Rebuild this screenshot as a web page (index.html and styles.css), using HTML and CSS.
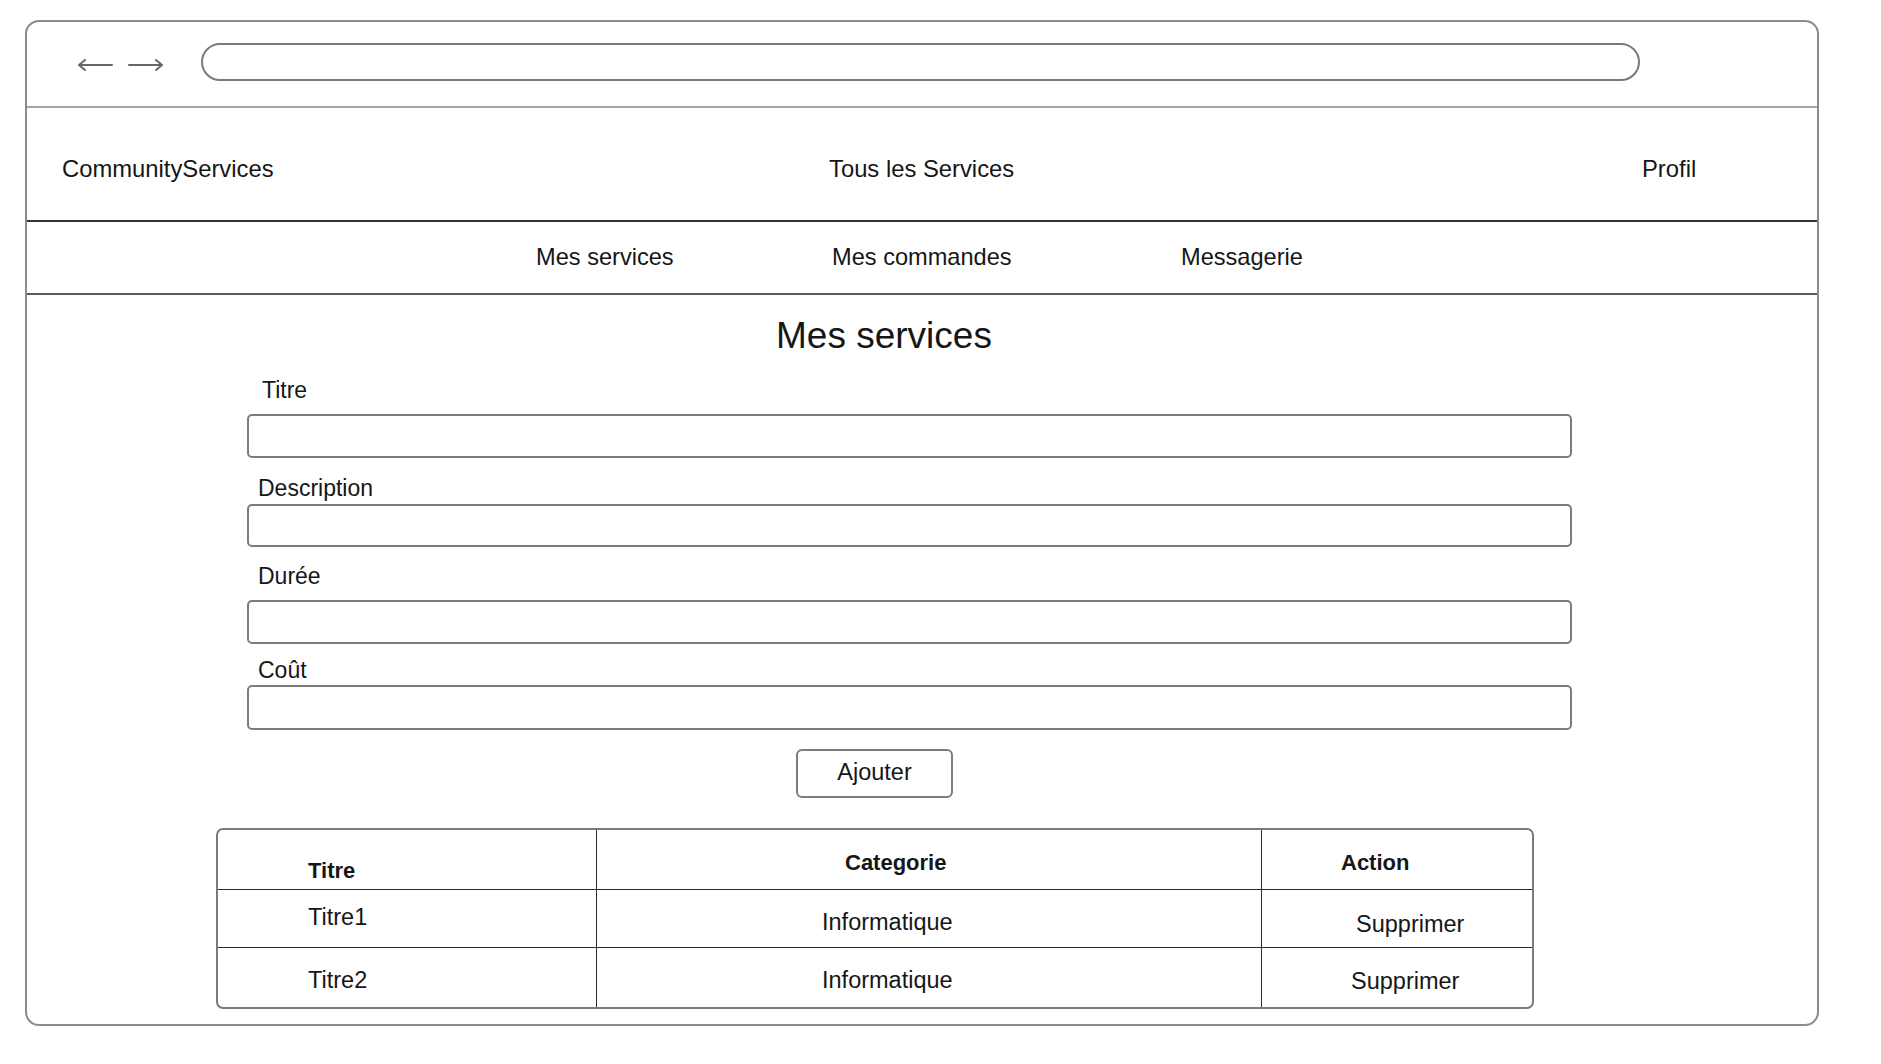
FILE: index.html
```html
<!DOCTYPE html>
<html lang="fr">
<head>
<meta charset="utf-8">
<title>CommunityServices - Mes services</title>
<link rel="stylesheet" href="styles.css">
</head>
<body>
<div class="frame">
  <div class="browserbar">
    <div class="arrows">
      <svg class="arrow" width="36" height="14" viewBox="0 0 36 14"><path d="M35 7H2M8 2L2 7L8 12" fill="none" stroke="#666" stroke-width="2" stroke-linecap="round" stroke-linejoin="round"/></svg>
      <svg class="arrow" width="36" height="14" viewBox="0 0 36 14"><path d="M1 7H34M28 2L34 7L28 12" fill="none" stroke="#666" stroke-width="2" stroke-linecap="round" stroke-linejoin="round"/></svg>
    </div>
    <div class="urlbar"></div>
  </div>
  <div class="nav">
    <span class="nav-item">CommunityServices</span>
    <span class="nav-item">Tous les Services</span>
    <span class="nav-item">Profil</span>
  </div>
  <div class="subnav">
    <span class="sub-item">Mes services</span>
    <span class="sub-item">Mes commandes</span>
    <span class="sub-item">Messagerie</span>
  </div>
  <div class="main">
    <h1 class="title">Mes services</h1>
    <form class="form">
      <label class="label l-titre">Titre</label>
      <div class="input i-titre"></div>
      <label class="label l-desc">Description</label>
      <div class="input i-desc"></div>
      <label class="label l-duree">Durée</label>
      <div class="input i-duree"></div>
      <label class="label l-cout">Coût</label>
      <div class="input i-cout"></div>
      <div class="btn-row"><button type="button" class="btn">Ajouter</button></div>
    </form>
    <table class="table">
      <thead>
        <tr class="row-head">
          <th class="c1 h-titre">Titre</th>
          <th class="c2 h-cat">Categorie</th>
          <th class="c3 h-action">Action</th>
        </tr>
      </thead>
      <tbody>
        <tr class="row1">
          <td class="c1 r1-titre">Titre1</td>
          <td class="c2 r-cat r1-cat">Informatique</td>
          <td class="c3 r1-act">Supprimer</td>
        </tr>
        <tr class="row2">
          <td class="c1 r2-titre">Titre2</td>
          <td class="c2 r-cat">Informatique</td>
          <td class="c3 r2-act">Supprimer</td>
        </tr>
      </tbody>
    </table>
  </div>
</div>
</body>
</html>
```
FILE: styles.css
```css
* { box-sizing: border-box; }
html, body { margin: 0; padding: 0; background: #fff; }
body {
  font-family: "Liberation Sans", Arial, sans-serif;
  color: #161616;
  font-size: 23px;
}
.frame {
  margin: 20px 0 0 25px;
  width: 1794px;
  height: 1006px;
  border: 2px solid #8c8c8c;
  border-radius: 14px;
  overflow: hidden;
}
.browserbar {
  height: 86px;
  border-bottom: 2px solid #a3a3a3;
  display: flex;
  align-items: flex-start;
  padding-left: 50px;
}
.arrows {
  display: flex;
  gap: 15px;
  margin-top: 36px;
}
.arrow { display: block; }
.urlbar {
  margin-left: 37px;
  margin-top: 21px;
  width: 1439px;
  height: 38px;
  border: 2px solid #7a7a7a;
  border-radius: 19px;
}
.nav {
  height: 114px;
  border-bottom: 2px solid #333;
  display: grid;
  grid-template-columns: 767px 813px auto;
  align-items: center;
  padding-left: 35px;
  padding-top: 9px;
  font-size: 23.8px;
}
.nav-item { line-height: 28px; }
.subnav {
  height: 73px;
  border-bottom: 2px solid #5a5a5a;
  display: grid;
  grid-template-columns: 296px 349px auto;
  align-items: center;
  padding-left: 509px;
  padding-bottom: 1px;
  font-size: 23.6px;
}
.sub-item { line-height: 28px; }
.main { position: relative; }
.title {
  margin: 19px 0 0 749px;
  font-size: 37px;
  font-weight: normal;
  line-height: 44px;
}
.form {
  margin: 0 0 0 220px;
  width: 1325px;
  display: flex;
  flex-direction: column;
}
.label { display: block; line-height: 28px; }
.l-titre { margin: 18px 0 0 15px; }
.l-desc { margin: 16px 0 0 11px; }
.l-duree { margin: 15px 0 0 11px; }
.l-cout { margin: 12px 0 0 11px; }
.input {
  border: 2px solid #7d7d7d;
  border-radius: 5px;
  height: 44px;
}
.i-titre { margin-top: 10px; }
.i-desc { margin-top: 2px; height: 43px; }
.i-duree { margin-top: 10px; }
.i-cout { margin-top: 1px; height: 45px; }
.btn-row { margin-top: 19px; padding-left: 549px; }
.btn {
  width: 157px;
  height: 49px;
  border: 2px solid #7d7d7d;
  border-radius: 6px;
  background: #fff;
  font-family: "Liberation Sans", Arial, sans-serif;
  font-size: 23.5px;
  color: #161616;
  padding: 0;
  line-height: 28px;
  padding-bottom: 4px;
}
.table {
  margin: 30px 0 0 189px;
  width: 1318px;
  border-collapse: separate;
  border-spacing: 0;
  border: 2px solid #7a7a7a;
  border-radius: 7px;
}
.table th, .table td {
  padding: 0;
  text-align: left;
  vertical-align: top;
  line-height: 28px;
  border-right: 1.5px solid #2a2a2a;
  border-bottom: 1.5px solid #2a2a2a;
}
.table .c3 { border-right: none; }
.table tbody .row2 td { border-bottom: none; }
.c1 { width: 379px; }
.c2 { width: 665px; }
.table th { font-weight: bold; font-size: 22px; }
.row-head th { height: 60px; }
.row1 td { height: 58px; }
.row2 td { height: 59px; }
.h-titre { padding: 27px 0 0 90px !important; }
.h-cat { padding: 19px 0 0 248px !important; }
.h-action { padding: 19px 0 0 79px !important; }
.table td { font-size: 23.5px; }
.r1-titre { padding: 13px 0 0 90px !important; }
.r-cat { padding: 18px 0 0 225px !important; }
.r1-cat { padding-top: 18px !important; }
.r1-act { padding: 20px 0 0 94px !important; }
.r2-titre { padding: 18px 0 0 90px !important; }
.row2 .r-cat { padding-top: 18px !important; }
.r2-act { padding: 19px 0 0 89px !important; }
```
